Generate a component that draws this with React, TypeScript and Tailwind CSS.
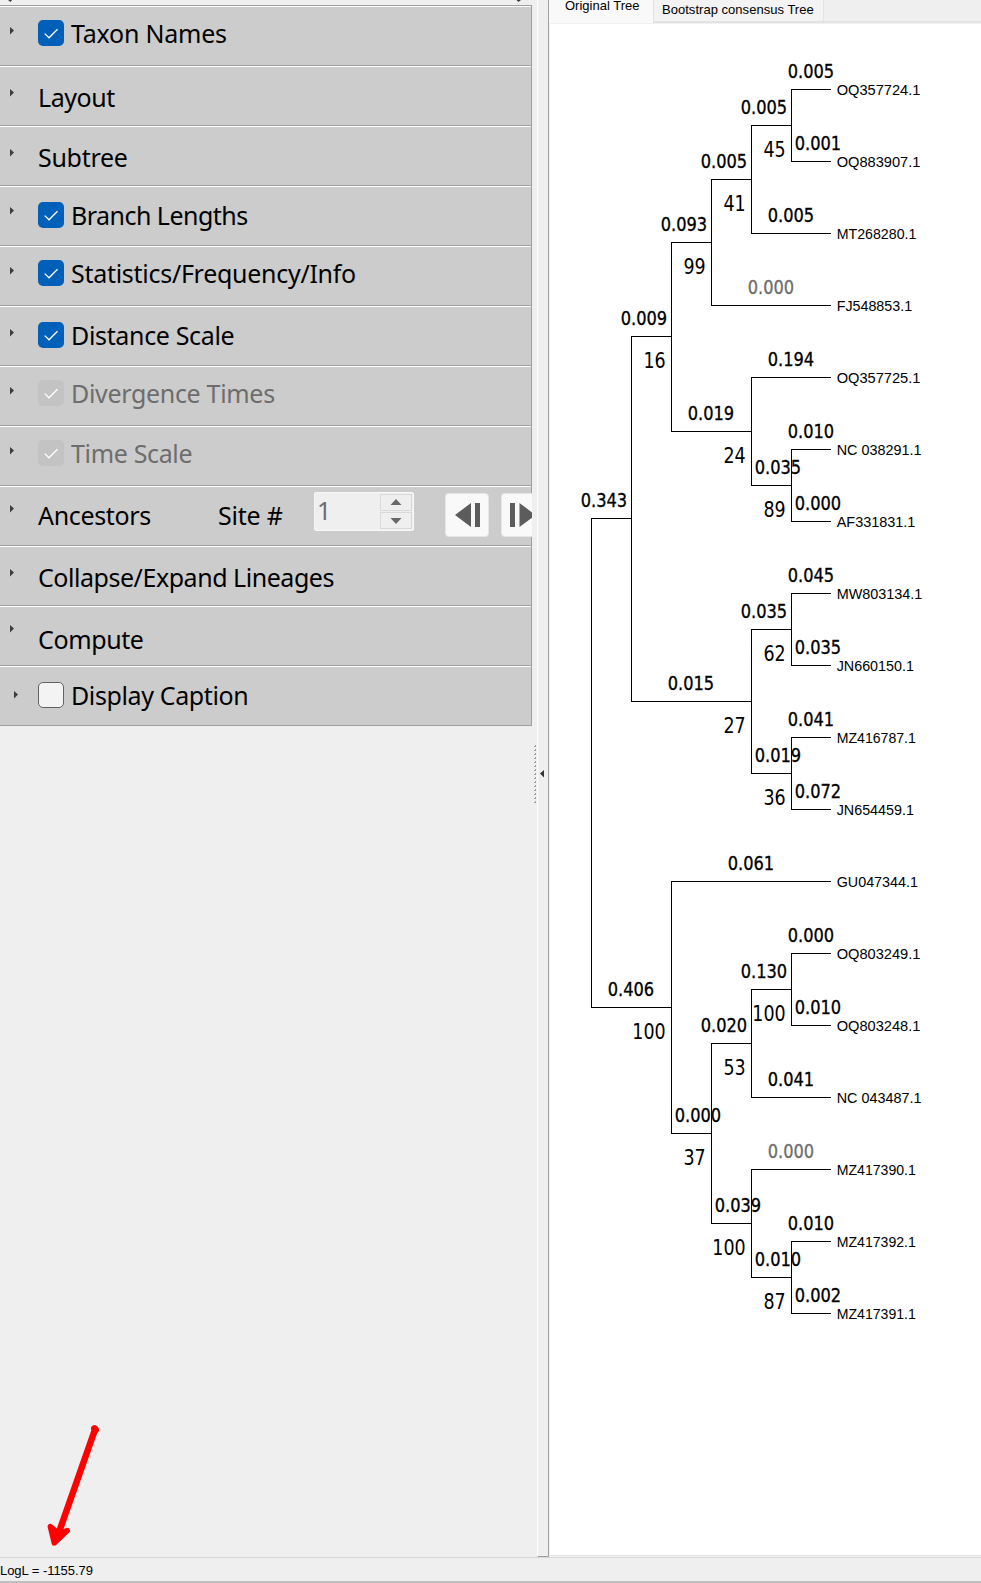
import React from "react";

type Row = {
  label: string;
  pad: string;
  arrow: string;
  tracking: string;
  check?: "on" | "off" | "disabled";
};

const rows: Row[] = [
  { label: "Taxon Names", pad: "pt-[13px]", arrow: "mt-[20px]", tracking: "tracking-[-0.22px]", check: "on" },
  { label: "Layout", pad: "pt-[17px]", arrow: "mt-[22px]", tracking: "tracking-[-0.42px]" },
  { label: "Subtree", pad: "pt-[17px]", arrow: "mt-[22px]", tracking: "tracking-[-0.3px]" },
  { label: "Branch Lengths", pad: "pt-[15px]", arrow: "mt-[20px]", tracking: "tracking-[-0.52px]", check: "on" },
  { label: "Statistics/Frequency/Info", pad: "pt-[13px]", arrow: "mt-[20px]", tracking: "tracking-[-0.28px]", check: "on" },
  { label: "Distance Scale", pad: "pt-[15px]", arrow: "mt-[22px]", tracking: "tracking-[-0.34px]", check: "on" },
  { label: "Divergence Times", pad: "pt-[13px]", arrow: "mt-[20px]", tracking: "tracking-[-0.32px]", check: "disabled" },
  { label: "Time Scale", pad: "pt-[13px]", arrow: "mt-[20px]", tracking: "tracking-[-0.34px]", check: "disabled" },
  { label: "Ancestors", pad: "pt-[15px]", arrow: "mt-[18px]", tracking: "tracking-[-0.35px]" },
  { label: "Collapse/Expand Lineages", pad: "pt-[17px]", arrow: "mt-[22px]", tracking: "tracking-[-0.46px]" },
  { label: "Compute", pad: "pt-[19px]", arrow: "mt-[18px]", tracking: "tracking-[-0.38px]" },
  { label: "Display Caption", pad: "pt-[15px]", arrow: "ml-1 mt-[24px]", tracking: "tracking-[-0.38px]", check: "off" },
];

function CheckBox({ state }: { state: "on" | "off" | "disabled" }) {
  const look =
    state === "on"
      ? "bg-[#005fb8]"
      : state === "disabled"
        ? "bg-[#c3c3c3]"
        : "border border-[#626262] bg-[#f3f3f3]";
  return (
    <span className={`mr-[7px] block h-[26px] w-[26px] shrink-0 rounded-[5px] ${look}`}>
      {state !== "off" && (
        <svg width="26" height="26" viewBox="0 0 26 26" fill="none" stroke="#fff" strokeWidth="1.3">
          <path d="M6.7 13.6 L11 17.8 L19.5 9.2" />
        </svg>
      )}
    </span>
  );
}

function SiteControls() {
  return (
    <>
      <span className="absolute left-[218px] top-[15px] text-[25px] leading-[26px] tracking-[-0.2px]">Site #</span>
      <div className="absolute left-[314px] top-[5px] flex h-[39px] w-[100px] items-center rounded-[2px] border border-[#f8f8f8] bg-[#efefef] pr-px">
        <span className="-mt-[3px] flex-1 pl-[2px] text-[25px] leading-[30px] text-[#6d6d6d]">1</span>
        <div className="flex w-8 flex-col gap-px">
          {["M16 5 L21.5 11 L10.5 11 Z", "M10.5 6 L21.5 6 L16 12 Z"].map((d) => (
            <span key={d} className="block h-[17px] w-8 bg-[#efefef] outline outline-1 -outline-offset-1 outline-[#d9d9d9]">
              <svg width="32" height="17"><path d={d} fill="#686868" /></svg>
            </span>
          ))}
        </div>
      </div>
      <div className="absolute left-[445px] top-[6px] flex h-11 w-[87px] gap-3 overflow-hidden">
        <span className="h-11 w-11 shrink-0 rounded-[4px] border border-[#e6e6e6] bg-[#f9f9f9]">
          <svg width="42" height="42" fill="#5c5c5c"><path d="M9 21 L25 9 V33 Z M29 9 h5 v24 h-5 Z" /></svg>
        </span>
        <span className="h-11 w-11 shrink-0 rounded-[4px] border border-[#e6e6e6] bg-[#f9f9f9]">
          <svg width="42" height="42" fill="#5c5c5c"><path d="M8 9 h5 v24 h-5 Z M17.500 9 L33.500 21 L17.500 33 Z" /></svg>
        </span>
      </div>
    </>
  );
}

function PanelRow({ row }: { row: Row }) {
  return (
    <div className="relative flex h-[60px] w-[531px] items-start border-b border-t border-b-[#9f9f9f] border-t-white bg-[#ccc]">
      <div className="w-[38px] shrink-0">
        <svg className={row.arrow} width="16" height="8" fill="#3c3c3c"><path d="M10 0 L14 3.500 L10 7.500 Z" /></svg>
      </div>
      <div className={`flex ${row.pad} ${row.check === "disabled" ? "text-[#6d6d6d]" : "text-black"}`}>
        {row.check && <CheckBox state={row.check} />}
        <span className={`whitespace-nowrap text-[25px] leading-[26px] ${row.tracking}`}>{row.label}</span>
      </div>
      {row.label === "Ancestors" && <SiteControls />}
    </div>
  );
}

// Tip name, drawn width
const tips: [string, number][] = [
  ["OQ357724.1", 83], ["OQ883907.1", 83], ["MT268280.1", 79], ["FJ548853.1", 74.7],
  ["OQ357725.1", 83], ["NC 038291.1", 84], ["AF331831.1", 78], ["MW803134.1", 85],
  ["JN660150.1", 76.5], ["MZ416787.1", 78.5], ["JN654459.1", 76.5], ["GU047344.1", 80.5],
  ["OQ803249.1", 83], ["OQ803248.1", 83], ["NC 043487.1", 84], ["MZ417390.1", 78.5],
  ["MZ417392.1", 78.5], ["MZ417391.1", 78.5],
];

// x start, x end, y
const branches: [number, number, number][] = [
  [791, 831, 89], [791, 831, 161], [751, 791, 125], [751, 831, 233], [711, 751, 179], [711, 831, 305],
  [671, 711, 242], [751, 831, 377], [791, 831, 449], [791, 831, 521], [751, 791, 485], [671, 751, 431],
  [631, 671, 336], [791, 831, 593], [791, 831, 665], [751, 791, 629], [791, 831, 737], [791, 831, 809],
  [751, 791, 773], [631, 751, 701], [591, 631, 518], [671, 831, 881], [791, 831, 953], [791, 831, 1025],
  [751, 791, 989], [751, 831, 1097], [711, 751, 1043], [751, 831, 1169], [791, 831, 1241], [791, 831, 1313],
  [751, 791, 1277], [711, 751, 1223], [671, 711, 1133], [591, 671, 1007],
];

// x, y start, y end
const joins: [number, number, number][] = [
  [791, 89, 161], [751, 125, 233], [711, 179, 305], [671, 242, 431], [751, 377, 485], [791, 449, 521],
  [631, 336, 701], [751, 629, 773], [791, 593, 665], [791, 737, 809], [591, 518, 1007], [671, 881, 1133],
  [791, 953, 1025], [751, 989, 1097], [711, 1043, 1223], [751, 1169, 1277], [791, 1241, 1313],
];

// text, left edge, branch y
const lengths: [string, number, number][] = [
  ["0.005", 788, 89], ["0.005", 741, 125], ["0.001", 795, 161], ["0.005", 701, 179], ["0.005", 768, 233],
  ["0.093", 661, 242], ["0.000", 748, 305], ["0.009", 621, 336], ["0.194", 768, 377], ["0.019", 688, 431],
  ["0.010", 788, 449], ["0.035", 755, 485], ["0.000", 795, 521], ["0.343", 581, 518], ["0.045", 788, 593],
  ["0.035", 741, 629], ["0.035", 795, 665], ["0.015", 668, 701], ["0.041", 788, 737], ["0.019", 755, 773],
  ["0.072", 795, 809], ["0.061", 728, 881], ["0.000", 788, 953], ["0.130", 741, 989], ["0.406", 608, 1007],
  ["0.010", 795, 1025], ["0.020", 701, 1043], ["0.041", 768, 1097], ["0.000", 675, 1133], ["0.000", 768, 1169],
  ["0.039", 715, 1223], ["0.010", 788, 1241], ["0.010", 755, 1277], ["0.002", 795, 1313],
];

// bootstrap support, node x, node y
const supports: [string, number, number][] = [
  ["45", 791, 125], ["41", 751, 179], ["99", 711, 242], ["16", 671, 336], ["24", 751, 431], ["89", 791, 485],
  ["62", 791, 629], ["27", 751, 701], ["36", 791, 773], ["100", 671, 1007], ["100", 791, 989], ["53", 751, 1043],
  ["37", 711, 1133], ["100", 751, 1223], ["87", 791, 1277],
];

function Tree() {
  return (
    <svg className="block" width="431" height="1531" viewBox="550 24 431 1531">
      <g fill="none" stroke="#000" strokeWidth="1" shapeRendering="crispEdges">
        {branches.map(([a, b, y]) => <path key={`${a}-${y}`} d={`M${a} ${y + 0.5} H${b}`} />)}
        {joins.map(([x, a, b]) => <path key={`${x}-${a}`} d={`M${x + 0.5} ${a} V${b + 1}`} />)}
      </g>
      <g className="font-['Liberation_Sans'] text-[15.3px]">
        {tips.map(([name, w], i) => (
          <text key={name} x={836.7} y={94.8 + i * 72} textLength={w + 0.7} lengthAdjust="spacingAndGlyphs">{name}</text>
        ))}
      </g>
      <g className="font-['DejaVu_Sans_Condensed','DejaVu_Sans',sans-serif] [font-stretch:condensed]">
        {lengths.map(([t, x, y]) => (
          <text
            key={`${x}-${y}`}
            x={x - 0.3}
            y={y - 11.5}
            textLength={46.5}
            lengthAdjust="spacingAndGlyphs"
            className="text-[19px]"
            strokeWidth="0.3"
            fill={t === "0.000" && (y === 305 || y === 1169) ? "#6e6e6e" : "#000"}
            stroke={t === "0.000" && (y === 305 || y === 1169) ? "#6e6e6e" : "#000"}
          >
            {t}
          </text>
        ))}
        {supports.map(([t, x, y]) => (
          <text
            key={`${x}-${y}`}
            x={x - 5.4 - t.length * 11.1}
            y={y + 31.7}
            textLength={t.length * 11.1}
            lengthAdjust="spacingAndGlyphs"
            className="text-[20.7px]"
          >
            {t}
          </text>
        ))}
      </g>
    </svg>
  );
}

export default function App() {
  return (
    <div className="relative flex h-[1583px] w-[981px] flex-col overflow-hidden bg-[#efefef] font-['Noto_Sans',sans-serif] text-black">
      <div className="flex h-[1557px]">
        <aside className="w-[537px] shrink-0">
          <div className="flex h-[5px] w-[532px] justify-between">
            <svg width="16" height="3" fill="#3c3c3c"><path d="M8 0 H12 L10.500 2 Z" /></svg>
            <svg width="18" height="3" fill="#3c3c3c"><path d="M2.500 0 H7 L4.500 2 Z" /></svg>
          </div>
          <div className="w-[532px] border-r border-t border-[#9f9f9f]">
            {rows.map((row) => <PanelRow key={row.label} row={row} />)}
          </div>
          <svg className="ml-[534px] mt-[19px]" width="3" height="60">
            {Array.from({ length: 15 }, (_, i) => (
              <g key={i}>
                <rect x="0" y={i * 4} width="2" height="2" fill="#fff" />
                <path d={`M2 ${i * 4} v2 h-2 v-1 h1 v-1 Z`} fill="#a0a0a0" />
              </g>
            ))}
          </svg>
        </aside>
        <div className="flex w-3 shrink-0 flex-col border-b border-l border-r border-b-[#9f9f9f] border-l-white border-r-[#9f9f9f]">
          <svg className="mt-[770px]" width="10" height="8" fill="#333"><path d="M6 0 L2 3.500 L6 7.500 Z" /></svg>
        </div>
        <main className="flex w-[432px] flex-col border-b border-l border-[#f3f3f3] font-['Liberation_Sans',sans-serif] text-[13px] leading-4">
          <div className="flex h-[24px] shrink-0 items-start border-b border-[#f0f0f0]">
            <div className="-ml-px h-[23px] w-[104px] bg-[#f9f9f9] pl-4">
              <span className="-mt-[2px] block whitespace-nowrap">Original Tree</span>
            </div>
            <div className="h-[23px] flex-1 border-b-2 border-[#e3e3e3] bg-[#efefef]">
              <div className="h-[21px] w-[171px] border-l border-r border-[#e3e3e3] bg-[#f3f3f3] pl-2">
                <span className="block whitespace-nowrap pt-[2px] tracking-[0.03px]">Bootstrap consensus Tree</span>
              </div>
            </div>
          </div>
          <div className="h-[1532px] border-b border-[#e0e0e0] bg-white"><Tree /></div>
        </main>
      </div>
      <footer className="flex h-[26px] items-start border-b-2 border-t border-b-[#bdbfc0] border-t-[#d7d7d7] pt-[5px] font-['Liberation_Sans',sans-serif] text-[13px] leading-4 tracking-[-0.05px]">
        LogL = -1155.79
      </footer>
      <svg className="absolute left-[40px] top-[1420px]" width="70" height="130" viewBox="40 1420 70 130" fill="none" stroke="#f00" strokeLinecap="round" strokeLinejoin="round">
        <path d="M95.200 1429 L58 1535" strokeWidth="6.500" />
        <path d="M94.500 1428.600 L95.500 1430" strokeWidth="6.800" />
        <path d="M50.300 1526.500 L54.300 1543 L67.300 1530.500 L59 1533.500 Z" strokeWidth="5.400" fill="#f00" />
      </svg>
    </div>
  );
}
